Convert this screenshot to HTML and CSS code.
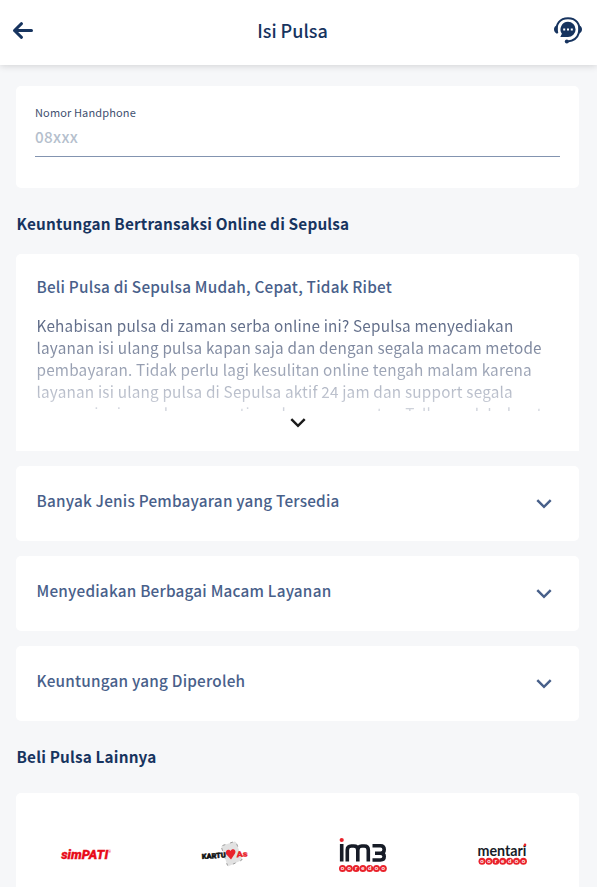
FILE: index.html
```html
<!DOCTYPE html>
<html lang="id">
<head>
<meta charset="utf-8">
<meta name="viewport" content="width=device-width, initial-scale=1">
<title>Isi Pulsa</title>
<link rel="stylesheet" href="styles.css">
</head>
<body>
<header class="topbar">
  <a class="back" aria-label="Kembali"><svg width="22" height="20" viewBox="0 0 22 20"><path d="M9.500 3.700 2.500 10.500l7 6.800M2.500 10.500H19.500"/></svg></a>
  <h1>Isi Pulsa</h1>
  <a class="support" aria-label="Bantuan"><svg width="30" height="28" viewBox="0 0 30 28">
    <path class="line" d="M4.300 17.200C1.700 7.500 7.500 2.200 15 2.200s13.300 5.300 10.700 15C24.600 21.300 20.500 24.800 14.500 25.400"/>
    <path class="fill" d="M4.500 9.200C2 9.600 1 11.200 1 13.300s1 3.800 3.500 4.200zM25.500 9.200c2.500.4 3.500 2 3.500 4.100s-1 3.800-3.500 4.200z"/>
    <path class="fill" d="M15 5.800a7.600 7.600 0 1 1 0 15.200H7.300l1.600-3.200A7.600 7.600 0 0 1 15 5.800z"/>
    <circle class="fill" cx="13.800" cy="25.500" r="2"/>
    <path class="dots" d="M10.200 12.600h2v2h-2zM14 12.600h2v2h-2zM17.800 12.600h2v2h-2z"/>
  </svg></a>
</header>
<main>
  <section class="card phone">
    <label for="nomor">Nomor Handphone</label>
    <input id="nomor" type="tel" placeholder="08xxx">
  </section>
  <h2>Keuntungan Bertransaksi Online di Sepulsa</h2>
  <section class="card intro">
    <h3>Beli Pulsa di Sepulsa Mudah, Cepat, Tidak Ribet</h3>
    <p>Kehabisan pulsa di zaman serba online ini? Sepulsa menyediakan<br>layanan isi ulang pulsa kapan saja dan dengan segala macam metode<br>pembayaran. Tidak perlu lagi kesulitan online tengah malam karena<br>layanan isi ulang pulsa di Sepulsa aktif 24 jam dan support segala<br>macam jenis vendor semua tipe, dengan operator. Telkomsel, Indosat</p>
    <svg class="chevron dark" width="18" height="12" viewBox="0 0 18 12"><path d="M2.300 2.200 9 8.800l6.700-6.600"/></svg>
  </section>
  <section class="card item"><h3>Banyak Jenis Pembayaran yang Tersedia</h3><svg class="chevron" width="18" height="12" viewBox="0 0 18 12"><path d="M2.300 2.200 9 8.800l6.700-6.600"/></svg></section>
  <section class="card item"><h3>Menyediakan Berbagai Macam Layanan</h3><svg class="chevron" width="18" height="12" viewBox="0 0 18 12"><path d="M2.300 2.200 9 8.800l6.700-6.600"/></svg></section>
  <section class="card item"><h3>Keuntungan yang Diperoleh</h3><svg class="chevron" width="18" height="12" viewBox="0 0 18 12"><path d="M2.300 2.200 9 8.800l6.700-6.600"/></svg></section>
  <h2 class="more">Beli Pulsa Lainnya</h2>
  <section class="card brands">
    <svg viewBox="0 0 60 44"><text class="simpati" x="5.200" y="26" textLength="47" lengthAdjust="spacingAndGlyphs">simPATI</text><text class="tm" x="52.500" y="20">®</text></svg>
    <svg viewBox="0 0 60 44">
      <path class="playing" d="m27.500 12.500 11.500-3.800q2-.5 2.500 1.500l5.500 15q.5 2-1.500 2.500l-11 5q-2 .5-2.500-1.500L26.500 14.500q-.5-1.500 1-2z"/>
      <path class="heart" d="m36 26.500-5-5.500c-1-4 3-5.500 4.500-3 1.500-3.500 6.500-1.500 4.500 2.500z"/>
      <g transform="rotate(-4 30 22)"><text class="kartu" x="6.700" y="24.500" textLength="24" lengthAdjust="spacingAndGlyphs">KARTU</text><text class="as" x="41.500" y="25" textLength="11" lengthAdjust="spacingAndGlyphs">As</text></g>
    </svg>
    <svg viewBox="1 0 60 44">
      <path class="im3" d="M8.700 11v17.500M14.300 28.500V17q0-4 4-4h2.500q4 0 4 4v11.500V17q0-4 4-4h2.500q4 0 4 4v11.500M39.500 12.800h8q3.700 0 3.700 3.800 0 3.700-3.700 3.700H42h5.500q3.700 0 3.700 3.300 0 3.400-3.700 3.400h-8"/>
      <circle class="reddot" cx="8.700" cy="7" r="2.100"/>
      <g class="ooredoo"><circle cx="9.500" cy="35.500" r="3.500"/><circle cx="16.300" cy="35.500" r="3.500"/><circle cx="23.100" cy="35.500" r="3.500"/><circle cx="29.900" cy="35.500" r="3.500"/><circle cx="36.700" cy="35.500" r="3.500"/><circle cx="43.500" cy="35.500" r="3.500"/><circle cx="50.300" cy="35.500" r="3.500"/><text x="9.500 16.300 23.100 29.900 36.700 43.500 50.300" y="37.200">ooredoo</text></g>
    </svg>
    <svg viewBox="0 0 60 44">
      <text class="mentari" x="4.500" y="22.600" textLength="49" lengthAdjust="spacingAndGlyphs">mentari</text>
      <circle class="reddot" cx="52" cy="11.900" r="1.300"/>
      <g class="ooredoo"><circle cx="9" cy="28.200" r="3.500"/><circle cx="15.900" cy="28.200" r="3.500"/><circle cx="22.800" cy="28.200" r="3.500"/><circle cx="29.700" cy="28.200" r="3.500"/><circle cx="36.600" cy="28.200" r="3.500"/><circle cx="43.500" cy="28.200" r="3.500"/><circle cx="50.400" cy="28.200" r="3.500"/><text x="9 15.900 22.800 29.700 36.600 43.500 50.400" y="29.900">ooredoo</text></g>
    </svg>
  </section>
</main>
</body>
</html>
```
FILE: styles.css
```css
* { box-sizing: border-box; }
body { margin: 0; height: 887px; overflow: hidden; background: #f6f7f9; color: #17345f; font-family: "Noto Sans CJK SC", "Noto Sans", sans-serif; }
h1, h2, h3, p { margin: 0; }
svg { display: block; fill: none; }
.topbar { position: relative; height: 65px; padding: 0 14px 6px 12px; display: grid; grid-template-columns: 30px 1fr 30px; align-items: center; background: #fff; box-shadow: 0 1px 7px rgba(0, 0, 0, .15); }
.back path { stroke: #17345f; stroke-width: 3; stroke-linecap: round; stroke-linejoin: round; }
.support .line { stroke: #17345f; stroke-width: 2; }
.support .fill { fill: #17345f; }
.support .dots { fill: #fff; }
h1 { padding-right: 10px; font-size: 18px; line-height: 26px; font-weight: 500; text-align: center; }
main { padding: 21px 18px 0 16px; }
.card { background: #fff; border-radius: 5px; }
.phone { height: 102px; padding: 17px 19px 0; }
.phone label { display: block; font-size: 11px; line-height: 18px; letter-spacing: .13px; color: #41506f; }
.phone input { display: block; width: 100%; height: 36px; border: 0; border-bottom: 1px solid #8394b0; padding: 0 0 6px; background: none; font: 500 15.300px/24px "Noto Sans CJK SC", sans-serif; letter-spacing: .3px; outline: 0; }
.phone input::placeholder { color: #b5bfcd; opacity: 1; }
h2 { padding-left: .5px; font-size: 15.300px; line-height: 24px; letter-spacing: .18px; font-weight: 700; margin: 23px 0 19px; }
h2.more { margin-bottom: 25px; }
h3 { font-size: 15.300px; line-height: 24px; letter-spacing: .22px; font-weight: 500; color: #48608a; }
.intro { height: 197px; padding: 20px 20.500px 0; border-radius: 5px 5px 0 0; }
.intro p { height: 97px; margin-top: 16px; overflow: hidden; white-space: nowrap; font-size: 15.300px; line-height: 22px; letter-spacing: .19px; color: #4a5878; -webkit-mask-image: linear-gradient(rgba(0,0,0,.95), rgba(0,0,0,.25)); mask-image: linear-gradient(rgba(0,0,0,.95), rgba(0,0,0,.25)); }
.chevron path { stroke: #48608a; stroke-width: 2.500; }
.chevron.dark { margin: 6px auto 0; }
.chevron.dark path { stroke: #1b1b1b; }
.item { height: 75px; margin-top: 15px; padding: 22px 26px 0 20.500px; display: flex; justify-content: space-between; }
.item .chevron { margin-top: 10px; }
.brands { height: 100px; padding: 40px 7px 0 1px; display: grid; grid-template-columns: repeat(4, 1fr); justify-items: center; }
.brands svg { width: 60px; height: 44px; }
.simpati { font: italic 900 12px Roboto, sans-serif; fill: #e80b18; stroke: #e80b18; stroke-width: .3; }
.tm { font: 3px Roboto, sans-serif; fill: #e80b18; }
.playing { fill: #e2e2e2; stroke: #777; stroke-width: .7; stroke-dasharray: 3 5; }
.heart, .reddot { fill: #e9222b; }
.kartu { font: 900 7px Roboto, sans-serif; fill: #111; stroke: #111; stroke-width: .5; }
.as { font: 900 8px Roboto, sans-serif; fill: #e9222b; stroke: #e9222b; stroke-width: .3; }
.im3 { stroke: #171c27; stroke-width: 3.600; }
.ooredoo circle { fill: #e9222b; }
.ooredoo text { font: 700 6px Lato, sans-serif; fill: #fff; text-anchor: middle; }
.mentari { font: 700 15.500px Lato, sans-serif; fill: #171c27; }
```
